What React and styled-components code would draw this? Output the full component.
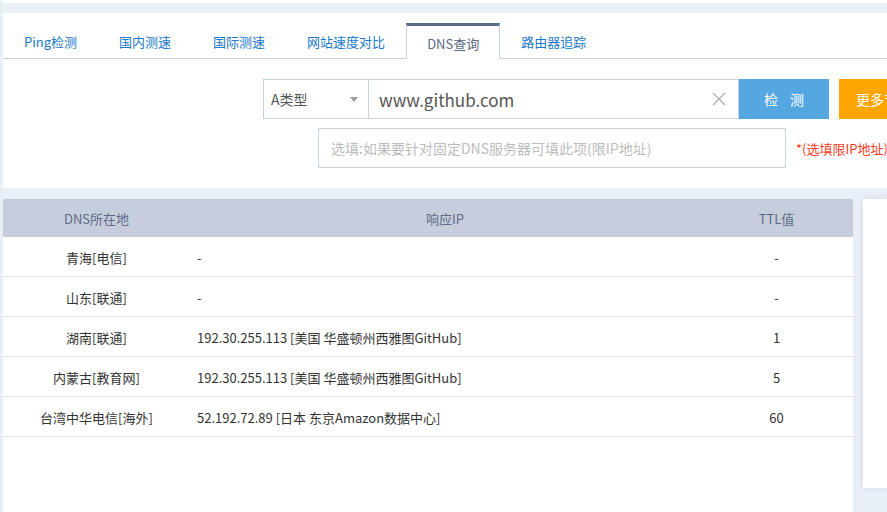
import React from "react";
import styled, { createGlobalStyle } from "styled-components";

const GlobalStyle = createGlobalStyle`
  html, body {
    margin: 0;
    padding: 0;
    background: #e9eff7;
    overflow: hidden;
    font-family: "Noto Sans CJK SC", "Noto Sans", sans-serif;
  }
`;

const Page = styled.div`
  width: 887px;
  height: 512px;
  padding-left: 3px;
  box-sizing: border-box;
  overflow: hidden;
`;

const TopStub = styled.div`
  height: 3px;
  background: #fff;
  width: 900px;
`;

const Card = styled.div`
  margin-top: 10px;
  width: 900px;
  height: 175px;
  background: #fff;
`;

const TabBar = styled.div`
  display: flex;
  align-items: flex-end;
  height: 46px;
  box-sizing: border-box;
  border-bottom: 1px solid #c9d1dd;
`;

const Tab = styled.div`
  box-sizing: border-box;
  display: flex;
  align-items: center;
  flex-shrink: 0;
  font-size: 13px;
  padding: ${(p) => (p.$active ? "1px 20px 0" : "1px 21px 0")};
  height: ${(p) => (p.$active ? "36px" : "35px")};
  color: ${(p) => (p.$active ? "#5a6785" : "#1a78c9")};
  background: ${(p) => (p.$active ? "#fff" : "transparent")};
  border-top: ${(p) => (p.$active ? "3px solid #5a6a8a" : "none")};
  border-left: ${(p) => (p.$active ? "1px solid #c9d1dd" : "none")};
  border-right: ${(p) => (p.$active ? "1px solid #c9d1dd" : "none")};
  margin-bottom: ${(p) => (p.$active ? "-1px" : "0")};
`;

const Form = styled.div`
  padding-top: 20px;
  display: flex;
  flex-direction: column;
  gap: 9px;
`;

const Row = styled.div`
  display: flex;
  align-items: center;
  padding-left: ${(p) => p.$indent}px;
`;

const Select = styled.div`
  width: 106px;
  height: 40px;
  flex-shrink: 0;
  box-sizing: border-box;
  border: 1px solid #c9d1dd;
  display: flex;
  align-items: center;
  justify-content: space-between;
  padding: 0 10px 0 7px;
  font-size: 14px;
  color: #555;
`;

const Caret = styled.span`
  width: 0;
  height: 0;
  border-left: 4px solid transparent;
  border-right: 4px solid transparent;
  border-top: 5px solid #999;
`;

const Input = styled.div`
  width: ${(p) => p.$w}px;
  height: 40px;
  flex-shrink: 0;
  box-sizing: border-box;
  border: 1px solid #c9d1dd;
  border-left: ${(p) => (p.$joined ? "none" : "1px solid #c9d1dd")};
  display: flex;
  align-items: center;
  justify-content: space-between;
  padding: 0 12px 0 ${(p) => (p.$joined ? "10px" : "12px")};
  font-size: ${(p) => (p.$placeholder ? "14px" : "17px")};
  color: ${(p) => (p.$placeholder ? "#bcbcbc" : "#555")};
`;

const Button = styled.div`
  width: 90px;
  height: 40px;
  flex-shrink: 0;
  background: ${(p) => p.$bg};
  color: #fff;
  font-size: 14px;
  display: flex;
  align-items: center;
  justify-content: ${(p) => (p.$left ? "flex-start" : "center")};
  padding-left: ${(p) => (p.$left ? "17px" : "12px")};
  box-sizing: border-box;
  margin-left: ${(p) => p.$ml || 0}px;
  letter-spacing: ${(p) => (p.$spaced ? "12px" : "0")};
  white-space: nowrap;
  overflow: hidden;
`;

const Hint = styled.span`
  margin-left: 10px;
  font-size: 13px;
  color: #ff3b1f;
  white-space: nowrap;
`;

const Bottom = styled.div`
  margin-top: 11px;
  display: flex;
  gap: 10px;
  align-items: flex-start;
`;

const Table = styled.div`
  width: 850px;
  height: 313px;
  background: #fff;
  flex-shrink: 0;
`;

const Grid = styled.div`
  display: grid;
  grid-template-columns: 187px 510px 153px;
  font-size: 13px;
`;

const Head = styled.div`
  height: 38px;
  background: #c6cedd;
  color: #5f6a86;
  display: flex;
  align-items: center;
  justify-content: center;
`;

const Cell = styled.div`
  height: 40px;
  box-sizing: border-box;
  border-bottom: 1px solid #e3e6ea;
  color: #333;
  display: flex;
  align-items: center;
  justify-content: ${(p) => (p.$left ? "flex-start" : "center")};
  padding-left: ${(p) => (p.$left ? "7px" : "0")};
  padding-top: 1px;
`;

const Side = styled.div`
  flex: 1;
  height: 289px;
  background: #fff;
  box-shadow: 0 0 6px rgba(160, 180, 210, 0.35);
`;

const rows = [
  ["青海[电信]", "-", "-"],
  ["山东[联通]", "-", "-"],
  ["湖南[联通]", "192.30.255.113 [美国 华盛顿州西雅图GitHub]", "1"],
  ["内蒙古[教育网]", "192.30.255.113 [美国 华盛顿州西雅图GitHub]", "5"],
  ["台湾中华电信[海外]", "52.192.72.89 [日本 东京Amazon数据中心]", "60"],
];

const tabs = ["Ping检测", "国内测速", "国际测速", "网站速度对比", "DNS查询", "路由器追踪"];

export default function App() {
  return (
    <Page>
      <GlobalStyle />
      <TopStub />
      <Card>
        <TabBar>
          {tabs.map((t) => (
            <Tab key={t} $active={t === "DNS查询"}>
              {t}
            </Tab>
          ))}
        </TabBar>
        <Form>
          <Row $indent={260}>
            <Select>
              A类型
              <Caret />
            </Select>
            <Input $w={370} $joined>
              www.github.com
              <svg width="14" height="14" viewBox="0 0 14 14">
                <path d="M1 1L13 13M13 1L1 13" stroke="#aaa" strokeWidth="1.1" />
              </svg>
            </Input>
            <Button $bg="#55a7e2" $spaced>
              检测
            </Button>
            <Button $bg="#ffa500" $ml={10} $left>
              更多节点
            </Button>
          </Row>
          <Row $indent={315}>
            <Input $w={468} $placeholder>
              选填:如果要针对固定DNS服务器可填此项(限IP地址)
            </Input>
            <Hint>*(选填限IP地址)</Hint>
          </Row>
        </Form>
      </Card>
      <Bottom>
        <Table>
          <Grid>
            <Head>DNS所在地</Head>
            <Head>响应IP</Head>
            <Head>TTL值</Head>
            {rows.map((r) => (
              <React.Fragment key={r[0]}>
                <Cell>{r[0]}</Cell>
                <Cell $left>{r[1]}</Cell>
                <Cell>{r[2]}</Cell>
              </React.Fragment>
            ))}
          </Grid>
        </Table>
        <Side />
      </Bottom>
    </Page>
  );
}
